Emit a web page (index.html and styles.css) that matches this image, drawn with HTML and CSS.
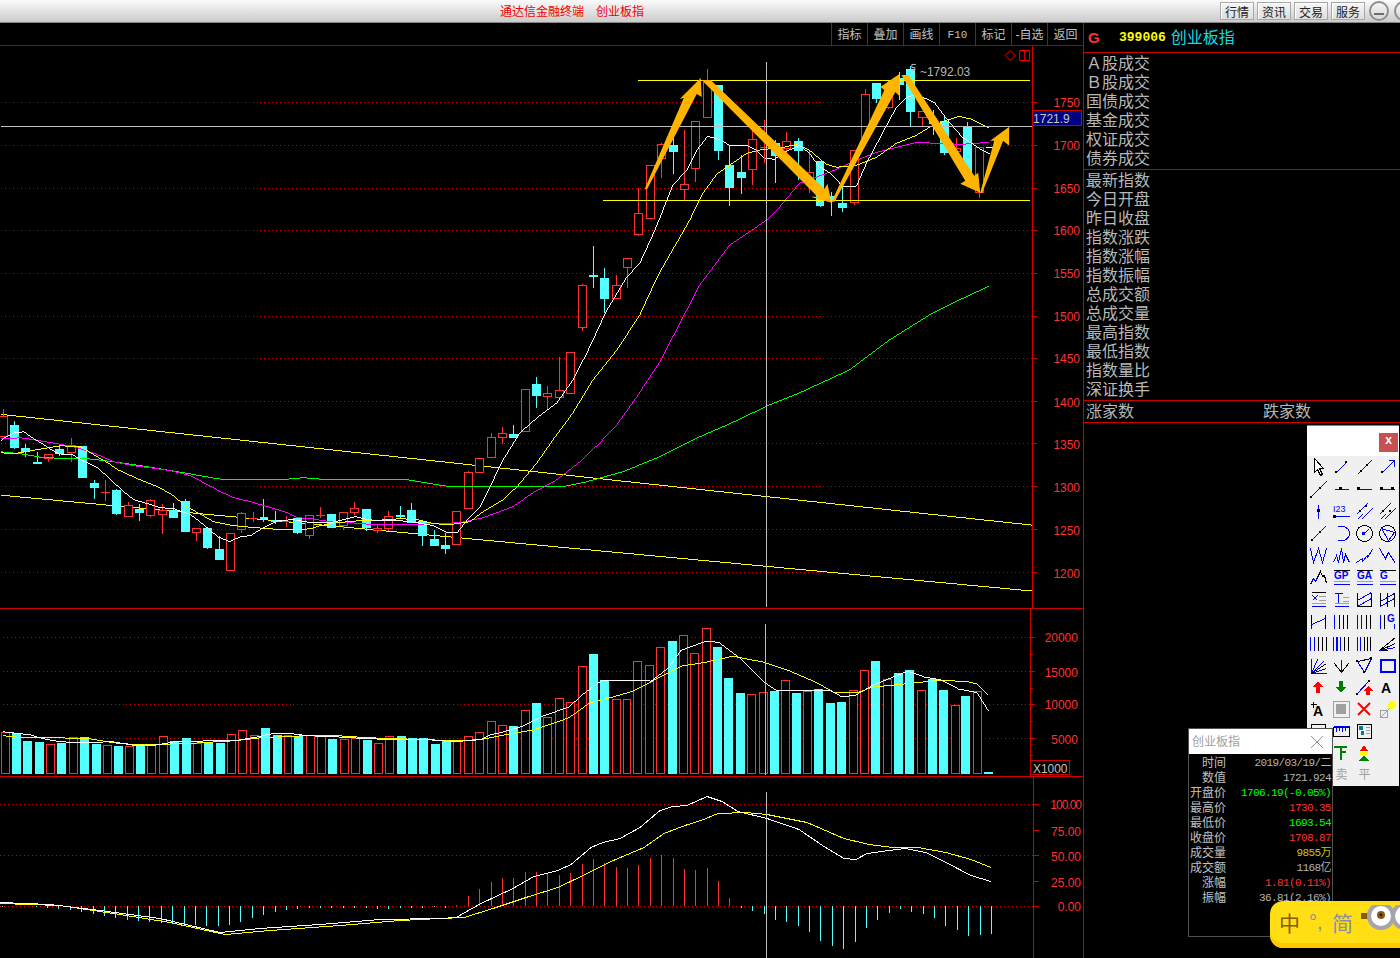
FILE: index.html
```html
<!DOCTYPE html>
<html lang="zh-CN">
<head>
<meta charset="utf-8">
<title>通达信金融终端 创业板指</title>
<link rel="stylesheet" href="styles.css">
</head>
<body>
<header class="titlebar">
  <h1 class="app-title"><span>通达信金融终端</span><span>创业板指</span></h1>
  <nav class="title-actions">
    <button class="menu-btn">行情</button>
    <button class="menu-btn">资讯</button>
    <button class="menu-btn">交易</button>
    <button class="menu-btn">服务</button>
    <span class="round-btn round-min"></span>
    <span class="round-btn round-alt"></span>
  </nav>
</header>
<main class="workspace">
  <section class="chart-col">
    <div class="chart-tools">
      <span class="chart-tool">指标</span>
      <span class="chart-tool">叠加</span>
      <span class="chart-tool">画线</span>
      <span class="chart-tool chart-tool-latin">F10</span>
      <span class="chart-tool">标记</span>
      <span class="chart-tool">-自选</span>
      <span class="chart-tool">返回</span>
    </div>
    <svg id="price" class="panel panel-price" xmlns="http://www.w3.org/2000/svg"></svg>
    <svg id="volume" class="panel panel-volume" xmlns="http://www.w3.org/2000/svg"></svg>
    <svg id="indicator" class="panel panel-indicator" xmlns="http://www.w3.org/2000/svg"></svg>
  </section>
  <aside class="side">
    <div class="side-head">
      <span class="side-mark">G</span>
      <span class="side-code">399006</span>
      <span class="side-name">创业板指</span>
    </div>
    <div class="stat-group">
      <div>Ａ股成交</div><div>Ｂ股成交</div><div>国债成交</div><div>基金成交</div><div>权证成交</div><div>债券成交</div>
    </div>
    <div class="stat-group">
      <div>最新指数</div><div>今日开盘</div><div>昨日收盘</div><div>指数涨跌</div><div>指数涨幅</div><div>指数振幅</div>
      <div>总成交额</div><div>总成交量</div><div>最高指数</div><div>最低指数</div><div>指数量比</div><div>深证换手</div>
    </div>
    <div class="breadth"><span>涨家数</span><span>跌家数</span></div>
  </aside>
</main>

<div class="toolbox">
  <div class="toolbox-head"><span class="toolbox-close">x</span></div>
  <div class="toolbox-grid">
    <svg viewBox="0 0 20 20"><path class="k-w" d="M6 1v14l3-3 3 6 2-1-3-6h4z"/></svg>
    <svg viewBox="0 0 20 20"><path class="b" d="M5 15 15 5"/><path class="kf" d="M4 14h2v2H4zM14 4h2v2h-2z"/></svg>
    <svg viewBox="0 0 20 20"><path class="b" d="M3 17 17 3"/><path class="kf" d="M6 13h2v2H6zM12 7h2v2h-2z"/></svg>
    <svg viewBox="0 0 20 20"><path class="b" d="M5 15 16 4"/><path class="b" d="M11 3h6v6"/><path class="kf" d="M4 14h2v2H4z"/></svg>

    <svg viewBox="0 0 20 20"><path class="b" d="M2 18 18 2"/><path class="kf" d="M2 17h2v2H2zM11 8h2v2h-2z"/></svg>
    <svg viewBox="0 0 20 20"><path class="b" d="M3 10h14"/><path class="kf" d="M8 8h3v3H8z"/></svg>
    <svg viewBox="0 0 20 20"><path class="b" d="M3 10h14"/><path class="kf" d="M3 8h3v3H3z"/></svg>
    <svg viewBox="0 0 20 20"><path class="b" d="M3 10h14"/><path class="kf" d="M3 8h3v3H3zM14 8h3v3h-3z"/></svg>

    <svg viewBox="0 0 20 20"><path class="b" d="M10 3v14"/><path class="kf" d="M9 8h3v3H9z"/></svg>
    <svg viewBox="0 0 20 20"><text class="tool-num" x="2" y="11">I23</text><path class="b" d="M4 15h14"/><path class="kf" d="M2 14h3v3H2z"/></svg>
    <svg viewBox="0 0 20 20"><path class="b" d="M2 13 13 2M7 18 18 7M3 18 8 13"/><path class="kf" d="M5 9h2v2H5zM11 4h2v2h-2z"/></svg>
    <svg viewBox="0 0 20 20"><path class="b" d="M2 13 13 2M7 18 18 7M3 18 8 13"/><path class="kf" d="M5 9h2v2H5zM12 9h2v2h-2z"/></svg>

    <svg viewBox="0 0 20 20"><path class="b" d="M3 17 17 3"/><path class="kf" d="M3 16h2v2H3zM11 8h2v2h-2z"/></svg>
    <svg viewBox="0 0 20 20"><path class="b" d="M6 3h5a7 7 0 0 1 0 14H6"/></svg>
    <svg viewBox="0 0 20 20"><circle class="k" cx="10" cy="10" r="8"/><path class="b" d="M10 10l4-4"/><path class="bf" d="M8 9h3v3H8z"/></svg>
    <svg viewBox="0 0 20 20"><circle class="k" cx="10" cy="10" r="8"/><path class="b" d="M4 5l13 4-6 8z"/></svg>

    <svg viewBox="0 0 20 20"><path class="b" d="M2 3l3 14 5-14 4 14 4-14"/></svg>
    <svg viewBox="0 0 20 20"><path class="b" d="M2 17l3-7 2 7 3-14 2 14 2-8 4 8"/></svg>
    <svg viewBox="0 0 20 20"><path class="b" d="M2 17l6-4v3l5-6v2l5-8"/></svg>
    <svg viewBox="0 0 20 20"><path class="b" d="M2 3l6 10 3-6 7 11"/></svg>

    <svg viewBox="0 0 20 20"><path class="b" d="M2 17l3-6 2 3 2-4"/><path class="k" d="M9 10l3-6 2 5 2-1 2 8"/></svg>
    <svg viewBox="0 0 20 20"><path class="k" d="M2 3h16"/><text class="tool-lab" x="3" y="12">GP</text><path class="g" d="M2 14h16"/><path class="b" d="M2 17h16"/></svg>
    <svg viewBox="0 0 20 20"><path class="k" d="M2 3h16"/><text class="tool-lab" x="3" y="12">GA</text><path class="g" d="M2 14h16"/><path class="b" d="M2 17h16"/></svg>
    <svg viewBox="0 0 20 20"><path class="k" d="M2 3h16"/><text class="tool-lab" x="3" y="12">G</text><path class="g" d="M2 14h16"/><path class="b" d="M2 17h16"/></svg>

    <svg viewBox="0 0 20 20"><path class="k" d="M3 3h14"/><path class="b" d="M3 17h14M4 6l5 5M9 6l-5 5"/><path class="g" d="M10 7h7M10 11h7M3 14h14"/></svg>
    <svg viewBox="0 0 20 20"><path class="b" d="M3 4h8M7 4v9M3 17h14"/><path class="g" d="M11 8h6M11 12h6M3 14h14"/></svg>
    <svg viewBox="0 0 20 20"><path class="k" d="M3 3v14M17 3v14M3 17h14"/><path class="b" d="M3 11 17 3M3 17 17 9"/></svg>
    <svg viewBox="0 0 20 20"><path class="k" d="M3 3v14M10 3v14M17 3v14"/><path class="b" d="M3 12 17 4M3 17 17 9"/></svg>

    <svg viewBox="0 0 20 20"><path class="k" d="M3 3v14M17 3v14"/><path class="b" d="M3 13 17 7"/></svg>
    <svg viewBox="0 0 20 20"><path class="b" d="M3 3v14"/><path class="k" d="M8 3v14M12 3v14M16 3v14"/></svg>
    <svg viewBox="0 0 20 20"><path class="b" d="M3 3v14M7 3v14"/><path class="k" d="M12 3v14M16 3v14"/></svg>
    <svg viewBox="0 0 20 20"><path class="b" d="M3 3v14"/><path class="k" d="M7 3v14"/><text class="tool-lab" x="10" y="11">G</text><path class="b" d="M17 12v5"/></svg>

    <svg viewBox="0 0 20 20"><path class="b" d="M2 3v14M6 3v14"/><path class="k" d="M10 3v14M14 3v14M18 3v14"/></svg>
    <svg viewBox="0 0 20 20"><path class="b" d="M2 3v14M5 3v14M6 3v14M9 3v14"/><path class="k" d="M13 3v14M17 3v14"/></svg>
    <svg viewBox="0 0 20 20"><path class="b" d="M3 3v14M6 3v14"/><path class="k" d="M10 3v14M13 3v14M16 3v14"/></svg>
    <svg viewBox="0 0 20 20"><path class="k" d="M2 17h8M2 17 18 4M2 17 18 10"/><path class="b" d="M2 17 18 14"/></svg>

    <svg viewBox="0 0 20 20"><path class="b" d="M3 3v15h15M3 18 18 13M3 18l12-12M3 18l6-14"/><path class="k" d="M3 18 18 8"/></svg>
    <svg viewBox="0 0 20 20"><path class="k" d="M3 8l7 9 7-9"/><path class="b" d="M10 4v13"/></svg>
    <svg viewBox="0 0 20 20"><path class="k" d="M3 6 17 3"/><path class="b" d="M3 6l7 11 7-14"/><path class="kf" d="M2 5h2v2H2zM9 16h2v2H9zM16 2h2v2h-2z"/></svg>
    <svg viewBox="0 0 20 20"><path class="b tool-frame" d="M3 4h14v12H3z"/></svg>

    <svg viewBox="0 0 20 20"><path class="rf" d="M10 4l5 6h-3v6H8v-6H5z"/></svg>
    <svg viewBox="0 0 20 20"><path class="gf" d="M8 4h4v6h3l-5 6-5-6h3z"/></svg>
    <svg viewBox="0 0 20 20"><path class="b" d="M2 17 15 3"/><path class="kf" d="M2 16h2v2H2zM14 3h2v2h-2z"/><path class="rf" d="M14 9l5 5h-3v4h-4v-4H9z"/></svg>
    <svg viewBox="0 0 20 20"><text class="tool-a" x="4" y="16">A</text></svg>

    <svg viewBox="0 0 20 20"><text class="tool-a" x="5" y="17">A</text><path class="k" d="M2 5h6M5 2v6"/></svg>
    <svg viewBox="0 0 20 20"><path class="g" d="M2 2h16v16H2z"/><path class="sq" d="M5 5h10v10H5z"/></svg>
    <svg viewBox="0 0 20 20"><path class="r2" d="M4 4l12 12M16 4 4 16"/></svg>
    <svg viewBox="0 0 20 20"><path class="g" d="M3 11h7v7H3zM3 18 16 5"/><circle class="yf" cx="15" cy="6" r="4"/></svg>

    <svg viewBox="0 0 20 20"><path class="k" d="M3 3h14v14H3z"/><path class="b" d="M6 7h8"/></svg>
    <svg viewBox="0 0 20 20"><path class="k" d="M2 6h16v9H2z"/><path class="b" d="M5 6v4M8 6v3M11 6v4M14 6v3M2 5h16"/></svg>
    <svg viewBox="0 0 20 20"><path class="k" d="M3 3h14v14H3z"/><path class="tf" d="M5 5h4v4H5zM7 10h3v4H7z"/><path class="g" d="M11 6h4M11 9h4M11 12h4"/></svg>
    <span></span>

    <span></span>
    <svg viewBox="0 0 20 20"><path class="g2" d="M3 4h13M10 4v13M10 9h5"/></svg>
    <svg viewBox="0 0 20 20"><path class="rf" d="M10 2l4 6H6z"/><path class="yf" d="M6 9h8v3H6z"/><path class="dgf" d="M10 12l5 6H5z"/></svg>
    <span></span>

    <span></span>
    <span class="tool-text">卖</span>
    <span class="tool-text">平</span>
    <span></span>
  </div>
</div>

<div class="quote">
  <div class="quote-head"><span>创业板指</span><span class="quote-x"></span></div>
  <dl class="quote-rows">
    <div><dt>时间</dt><dd>2019/03/19/二</dd></div>
    <div><dt>数值</dt><dd>1721.924</dd></div>
    <div><dt>开盘价</dt><dd class="q-green">1706.19(-0.05%)</dd></div>
    <div><dt>最高价</dt><dd class="q-red">1730.35</dd></div>
    <div><dt>最低价</dt><dd class="q-green">1693.54</dd></div>
    <div><dt>收盘价</dt><dd class="q-red">1708.87</dd></div>
    <div><dt>成交量</dt><dd class="q-yellow">9855万</dd></div>
    <div><dt>成交额</dt><dd>1168亿</dd></div>
    <div><dt>涨幅</dt><dd class="q-red">1.81(0.11%)</dd></div>
    <div><dt>振幅</dt><dd>36.81(2.16%)</dd></div>
  </dl>
</div>

<div class="ime">
  <span class="ime-mode">中</span>
  <span class="ime-punc">°,</span>
  <span class="ime-script">简</span>
  <svg class="ime-eyes" viewBox="0 0 40 34" xmlns="http://www.w3.org/2000/svg">
    <path class="eye-strap" d="M0 8h7v6H0z"/>
    <circle class="eye-ring" cx="20" cy="11" r="12"/>
    <circle class="eye-pupil" cx="20" cy="10" r="4"/>
    <circle class="eye-dot" cx="20" cy="10" r="1.4"/>
    <circle class="eye-ring" cx="44" cy="11" r="12"/>
  </svg>
</div>
<script src="script.js"></script>
</body>
</html>
```
FILE: styles.css
```css
* { box-sizing: border-box; }
html, body { margin: 0; height: 958px; overflow: hidden; background: #000; }
body {
  position: relative;
  width: 1400px;
  font-family: "Liberation Sans", "Noto Sans CJK SC", sans-serif;
  font-size: 12px;
  color: #c0c0c0;
}

/* title bar */
.titlebar {
  display: flex;
  align-items: center;
  height: 23px;
  padding-left: 500px;
  background: linear-gradient(#fbfbfb, #cbcbcb);
  border-bottom: 1px solid #858585;
  overflow: hidden;
}
.app-title {
  display: flex;
  gap: 12px;
  flex: none;
  width: 144px;
  margin: -2px 0 0;
  font-size: 12px;
  font-weight: 400;
  color: #f00000;
}
.title-actions {
  display: flex;
  align-items: center;
  flex: none;
  gap: 3px;
  margin-left: 576px;
}
.menu-btn {
  width: 34px;
  height: 18px;
  padding: 0 0 2px;
  font: inherit;
  color: #222;
  background: linear-gradient(#f6f6f6, #dedede);
  border: 1px solid #a8a8a8;
  box-shadow: inset 1px 1px 0 #fff;
}
.round-btn {
  position: relative;
  flex: none;
  width: 20px;
  height: 20px;
  margin-left: 1px;
  background: linear-gradient(#f4f4f4, #d8d8d8);
  border: 2px solid #8e8e8e;
  border-radius: 50%;
}
.round-min::after {
  content: "";
  position: absolute;
  left: 3px;
  right: 3px;
  bottom: 4px;
  height: 2px;
  background: #6e6e6e;
}
.round-alt { margin-left: 2px; }
.round-alt::after {
  content: "";
  position: absolute;
  left: 4px;
  top: 4px;
  width: 8px;
  height: 8px;
  border: 1px solid #6e6e6e;
}

/* main layout */
.workspace { display: flex; height: 935px; }
.chart-col { flex: none; width: 1083px; }
.chart-tools {
  display: flex;
  justify-content: flex-end;
  height: 23px;
  border-bottom: 1px solid #a80000;
}
.chart-tool {
  width: 36px;
  line-height: 24px;
  text-align: center;
  border-left: 1px solid #c00000;
  white-space: nowrap;
}
.chart-tool-latin { font-family: "Liberation Mono", monospace; font-size: 11px; }
.panel { display: block; width: 1083px; border-bottom: 1px solid #d00000; }
.panel-price { height: 563px; }
.panel-volume { height: 168px; }
.panel-indicator { height: 181px; border-bottom: 0; }

/* chart drawing */
.grid { stroke: #d00000; stroke-width: 1; stroke-dasharray: 1 3; fill: none; shape-rendering: crispEdges; }
.axis { stroke: #d00000; stroke-width: 1; fill: none; shape-rendering: crispEdges; }
.axis-text { fill: #ff3232; font-size: 12px; text-anchor: end; }
.axis-text-tight { letter-spacing: -1px; }
.body-up { fill: #000; stroke: #ff3232; stroke-width: 1; shape-rendering: crispEdges; }
.body-down { fill: #54ffff; shape-rendering: crispEdges; }
.body-flat { fill: #fff; shape-rendering: crispEdges; }
.wick-up { stroke: #ff3232; stroke-width: 1; shape-rendering: crispEdges; }
.wick-down { stroke: #54ffff; stroke-width: 1; shape-rendering: crispEdges; }
.curve { fill: none; stroke-width: 1; shape-rendering: crispEdges; }
.c-white { stroke: #fff; }
.c-yellow { stroke: #ffff00; }
.c-magenta { stroke: #ff00ff; }
.c-green { stroke: #00ff00; }
.trend { stroke: #ffff00; stroke-width: 1; shape-rendering: crispEdges; }
.level { stroke: #ffff00; stroke-width: 1; shape-rendering: crispEdges; }
.cross { stroke: #c0c0c0; stroke-width: 1; shape-rendering: crispEdges; }
.arrow { fill: #ffb400; }
.peak-text { fill: #b8b8b8; font-size: 12px; text-anchor: end; }
.peak-mark { fill: none; stroke: #b8b8b8; stroke-width: 1; }
.marker { fill: none; stroke: #f00000; stroke-width: 1; }
.price-box { fill: #000080; stroke: #d00000; shape-rendering: crispEdges; }
.price-text { fill: #c8c8c8; font-size: 12px; }
.scale-box { fill: #000; stroke: #d00000; shape-rendering: crispEdges; }
.scale-text { fill: #c0c0c0; font-size: 12px; }

/* right panel */
.side { flex: 1; border-left: 1px solid #c80000; }
.side-head {
  display: flex;
  align-items: center;
  height: 30px;
  padding-left: 4px;
  border-bottom: 1px solid #c80000;
}
.side-mark { width: 31px; font: 700 15px "Liberation Sans", sans-serif; color: #ff3232; }
.side-code { font: 700 13px "Liberation Mono", monospace; color: #ffff00; }
.side-name { margin-left: 5px; padding-bottom: 3px; font-size: 16px; color: #19d8e8; }
.stat-group {
  padding: 1px 0 1px 2px;
  font-size: 16px;
  line-height: 19px;
  color: #b8b8b8;
  border-bottom: 1px solid #c80000;
}
.breadth {
  display: flex;
  height: 22px;
  padding-left: 2px;
  font-size: 16px;
  line-height: 21px;
  color: #b8b8b8;
  border-bottom: 1px solid #c80000;
}
.breadth span { width: 177px; }

/* floating drawing tools */
.toolbox {
  position: absolute;
  left: 1307px;
  top: 425px;
  width: 92px;
  height: 361px;
  background: #f0f0f0;
  border-top: 1px solid #4a90c8;
}
.toolbox-head {
  display: flex;
  justify-content: flex-end;
  height: 30px;
  padding: 7px 1px 0 0;
  background: #fff;
}
.toolbox-close {
  width: 19px;
  height: 19px;
  font: 700 12px/17px "Liberation Mono", monospace;
  text-align: center;
  color: #fff;
  background: #c75050;
}
.toolbox-grid {
  display: grid;
  grid-template-columns: repeat(4, 23px);
  grid-auto-rows: 22px;
}
.toolbox-grid svg { width: 20px; height: 20px; margin: 1px 0 0 1px; shape-rendering: crispEdges; }
.toolbox-grid path, .toolbox-grid circle { fill: none; }
.toolbox-grid .k, .toolbox-grid .b, .toolbox-grid .g { transform: translate(0.5px, 0.5px); }
.toolbox-grid .k { stroke: #000; }
.toolbox-grid .k-w { stroke: #000; fill: #fff; transform: translate(0.5px, 0.5px); }
.toolbox-grid .kf { fill: #000; }
.toolbox-grid .b { stroke: #0000ff; }
.toolbox-grid .bf { fill: #0000ff; }
.toolbox-grid .g { stroke: #a0a0a0; }
.toolbox-grid .sq { fill: #a0a0a0; }
.toolbox-grid .g2 { stroke: #008000; stroke-width: 2; }
.toolbox-grid .gf { fill: #008000; }
.toolbox-grid .rf { fill: #ff0000; }
.toolbox-grid .r2 { stroke: #ff0000; stroke-width: 2; shape-rendering: auto; }
.toolbox-grid .yf { fill: #ffff00; }
.toolbox-grid .dgf { fill: #008000; }
.toolbox-grid .tf { fill: #008080; }
.toolbox-grid .tool-frame { stroke-width: 2; }
.tool-num { fill: #0000ff; font-size: 9px; }
.tool-lab { fill: #0000ff; font-size: 10px; font-weight: 700; }
.tool-a { fill: #000; font-size: 14px; font-weight: 700; }
.tool-text { font-size: 12px; line-height: 22px; text-align: center; color: #a0a0a0; }

/* quote popup */
.quote {
  position: absolute;
  left: 1188px;
  top: 728px;
  width: 145px;
  height: 209px;
  background: #000;
  border: 1px solid #505050;
}
.quote-head {
  display: flex;
  justify-content: space-between;
  align-items: center;
  height: 25px;
  padding: 0 9px 2px 3px;
  font-size: 12px;
  color: #a0a0a0;
  background: #fff;
}
.quote-x {
  position: relative;
  margin-top: 2px;
  width: 12px;
  height: 12px;
  background:
    linear-gradient(45deg, transparent 46%, #909090 46%, #909090 54%, transparent 54%),
    linear-gradient(-45deg, transparent 46%, #909090 46%, #909090 54%, transparent 54%);
}
.quote-rows { margin: 2px 0 0; }
.quote-rows div { display: flex; height: 15px; line-height: 15px; }
.quote-rows dt { width: 37px; text-align: right; white-space: nowrap; }
.quote-rows dd {
  flex: 1;
  margin: 0;
  padding-right: 1px;
  text-align: right;
  white-space: nowrap;
  font-family: "Liberation Mono", "Noto Sans CJK SC", monospace;
  font-size: 11px;
  letter-spacing: -0.6px;
  color: #b4b4b4;
}
.quote-rows .q-green { color: #00ff00; }
.quote-rows .q-red { color: #ff3232; }
.quote-rows .q-yellow { color: #c8c800; }

/* input method bar */
.ime {
  position: absolute;
  left: 1270px;
  top: 901px;
  display: flex;
  align-items: center;
  width: 150px;
  height: 47px;
  padding: 0 0 5px 9px;
  background: #ffdf14;
  border-radius: 13px;
  box-shadow: inset 0 -5px 0 #ffc800;
}
.ime-mode { width: 30px; font-size: 21px; color: #8a5a12; }
.ime-punc { width: 23px; font-size: 20px; color: #8e8e9e; }
.ime-script { width: 29px; font-size: 21px; color: #8e8e9e; }
.ime-eyes { flex: none; width: 40px; height: 34px; overflow: hidden; }
.eye-strap { fill: #8a5a12; }
.eye-ring { fill: #fff; stroke: #a4a4ae; stroke-width: 4; }
.eye-pupil { fill: #8a5a12; }
.eye-dot { fill: #2a1a08; }
```
FILE: script.js
```js
var NS = "http://www.w3.org/2000/svg";

function add(svg, tag, cls, attrs, text) {
  var el = document.createElementNS(NS, tag);
  if (cls) el.setAttribute("class", cls);
  for (var k in attrs) el.setAttribute(k, attrs[k]);
  if (text !== undefined) el.textContent = text;
  svg.appendChild(el);
  return el;
}
function X(i) { return Math.floor(2.1 + 11.372 * i); }
function curve(svg, cls, pts) {
  add(svg, "polyline", "curve " + cls, {
    points: pts.map(function (p) { return p[0] + "," + (p[1] + 0.5); }).join(" ")
  });
}
function hline(svg, cls, y, x1, x2) {
  add(svg, "line", cls, { x1: x1, x2: x2, y1: y + 0.5, y2: y + 0.5 });
}
function vline(svg, cls, x, y1, y2) {
  add(svg, "line", cls, { x1: x + 0.5, x2: x + 0.5, y1: y1, y2: y2 });
}
function axisLabel(svg, txt, y, cls) {
  add(svg, "text", "axis-text" + (cls ? " " + cls : ""), { x: 1081, y: y + 5 }, txt);
}

/* [body top, body bottom, high, low, kind] */
var candles = [
[417,437,410,437,"r"],[426,448,422,450,"c"],[449,452,445,458,"c"],[463,463,453,464,"c"],[455,459,455,463,"r"],
[450,454,447,457,"c"],[446,453,439,463,"r"],[447,478,447,479,"c"],[484,488,481,500,"c"],[493,493,481,502,"r"],
[491,514,490,516,"c"],[506,517,503,517,"r"],[510,513,505,522,"c"],[501,516,500,518,"r"],[511,515,505,535,"r"],
[511,518,504,519,"c"],[502,532,500,533,"c"],[529,533,529,542,"r"],[529,548,529,550,"c"],[550,560,537,561,"c"],
[534,571,534,571,"r"],[514,530,513,534,"r"],[519,519,513,523,"r"],[518,518,500,523,"c"],[521,521,512,525,"c"],
[522,522,517,528,"r"],[519,533,519,535,"c"],[516,536,516,540,"r"],[516,516,508,519,"r"],[515,528,515,528,"c"],
[513,526,513,531,"r"],[509,513,503,516,"r"],[510,528,510,532,"c"],[529,531,526,534,"r"],[517,529,512,532,"r"],
[516,516,507,520,"c"],[511,523,504,523,"c"],[522,536,522,547,"c"],[540,546,531,546,"c"],[546,549,534,555,"c"],
[512,545,512,545,"r"],[473,509,472,509,"r"],[459,473,459,473,"r"],[438,458,434,459,"r"],[434,438,428,445,"r"],
[435,438,426,439,"c"],[390,432,390,432,"r"],[385,396,378,409,"c"],[394,397,387,411,"r"],[391,398,358,399,"r"],
[353,394,353,395,"r"],[285,328,284,332,"r"],[275,275,246,288,"c"],[278,298,268,313,"c"],[285,298,275,299,"r"],
[258,267,258,288,"r"],[213,234,188,236,"r"],[165,218,165,219,"r"],[144,158,143,178,"r"],[145,151,138,174,"c"],
[184,189,130,200,"r"],[121,168,121,182,"r"],[82,117,69,117,"r"],[85,150,85,160,"c"],[165,187,145,206,"c"],
[172,177,155,194,"c"],[139,169,130,185,"r"],[147,147,120,163,"r"],[143,155,140,183,"c"],[141,148,132,163,"r"],
[141,150,138,180,"c"],[172,183,150,193,"r"],[161,205,161,207,"c"],[196,200,192,216,"c"],[203,207,183,212,"c"],
[150,202,150,205,"r"],[94,137,89,137,"r"],[83,98,83,103,"c"],[86,107,80,109,"r"],[78,84,72,100,"c"],
[69,111,66,127,"c"],[111,117,111,126,"r"],[121,123,110,135,"c"],[121,152,117,155,"c"],[148,151,138,151,"r"],
[127,173,122,175,"c"],[147,192,147,198,"r"],[147,147,147,147,"w"]
];
var volumes = [
[733,"r"],[734,"c"],[742,"c"],[743,"c"],[745,"r"],[744,"c"],[738,"r"],[738,"c"],[745,"c"],[746,"r"],
[747,"c"],[747,"r"],[745,"c"],[745,"r"],[737,"r"],[742,"c"],[739,"c"],[744,"r"],[744,"c"],[744,"c"],
[735,"r"],[731,"r"],[736,"r"],[729,"c"],[736,"c"],[736,"r"],[737,"c"],[736,"r"],[736,"r"],[740,"c"],
[740,"r"],[739,"r"],[741,"c"],[744,"r"],[737,"r"],[737,"c"],[739,"c"],[739,"c"],[745,"c"],[741,"c"],
[742,"r"],[737,"r"],[733,"r"],[722,"r"],[726,"r"],[727,"c"],[711,"r"],[704,"c"],[718,"r"],[699,"r"],
[703,"r"],[666,"r"],[654,"c"],[680,"c"],[700,"r"],[700,"r"],[661,"r"],[665,"r"],[647,"r"],[641,"c"],
[635,"r"],[653,"r"],[628,"r"],[647,"c"],[678,"c"],[694,"c"],[695,"r"],[693,"r"],[691,"c"],[680,"r"],
[693,"c"],[691,"r"],[689,"c"],[704,"c"],[703,"c"],[690,"r"],[670,"r"],[661,"c"],[679,"r"],[673,"c"],
[670,"c"],[690,"r"],[679,"c"],[690,"c"],[706,"r"],[697,"c"],[691,"r"],[773,"c"]
];
/* indicator bar end points, by candle index; above 906 is red, below is cyan */
var macd = [
907,906,906,907,908,909,910,912,914,916,918,920,921,922,923,924,925,925,926,926,
925,922,918,915,912,910,909,908,908,908,908,908,908,909,909,908,908,908,907,908,
905,896,889,882,878,878,872,872,873,875,873,864,859,863,867,868,865,858,855,858,
869,870,868,881,898,908,911,914,920,922,926,932,941,946,949,942,928,920,913,909,
912,914,918,926,930,936,935,934
];

var ma5 = [[0,441],[5,437],[13,433],[23,432],[33,439],[43,445],[57,454],[72,455],[80,460],[97,468],[110,480],[123,492],[133,500],[147,504],[160,508],[173,509],[190,515],[203,525],[217,537],[229,542],[240,537],[250,536],[263,528],[277,521],[293,520],[310,523],[330,523],[343,520],[355,517],[367,520],[380,521],[400,521],[417,523],[433,526],[447,533],[457,533],[470,517],[480,507],[490,487],[503,460],[520,433],[537,418],[557,403],[573,380],[587,353],[607,310],[627,277],[640,263],[652,237],[660,218],[673,185],[687,170],[697,150],[708,136],[720,139],[730,145],[747,145],[757,150],[765,158],[775,159],[785,152],[800,145],[810,153],[820,167],[833,175],[843,186],[857,186],[867,163],[883,133],[897,107],[907,97],[917,94],[935,102],[947,118],[963,137],[980,148],[991,154]];
var ma10 = [[0,453],[13,454],[47,448],[60,446],[80,447],[93,455],[107,463],[117,470],[137,479],[157,487],[173,496],[183,505],[197,513],[213,522],[227,525],[243,527],[267,529],[283,530],[300,530],[310,529],[320,526],[337,523],[360,521],[373,521],[400,519],[417,520],[433,524],[450,525],[470,522],[483,512],[503,500],[517,487],[537,463],[553,440],[573,413],[593,380],[617,350],[640,315],[650,293],[660,272],[690,220],[703,193],[718,173],[730,165],[747,153],[763,149],[780,148],[797,144],[810,150],[827,164],[837,167],[857,165],[877,157],[897,143],[917,135],[930,127],[947,120],[960,116],[973,119],[990,128]];
var ma20 = [[0,439],[20,438],[33,440],[57,444],[77,448],[97,455],[113,462],[133,466],[150,468],[170,471],[190,476],[207,485],[220,492],[233,498],[250,502],[267,507],[287,513],[297,518],[310,519],[330,522],[350,523],[373,525],[400,525],[440,524],[460,523],[483,518],[513,507],[533,493],[557,480],[580,462],[600,443],[617,425],[637,397],[660,362],[700,285],[730,245],[767,220],[780,207],[800,183],[830,172],[857,160],[877,152],[897,147],[917,142],[937,143],[963,144],[990,142]];
var ma60 = [[0,452],[20,454],[43,458],[87,459],[113,462],[147,467],[183,473],[217,479],[227,480],[280,480],[303,478],[327,480],[407,480],[443,486],[453,487],[507,487],[563,487],[587,482],[623,472],[660,457],[700,437],[730,424],[770,405],[800,393],[850,370],[890,340],[930,315],[960,300],[990,286]];

var volWhite = [[0,732],[27,735],[40,739],[57,742],[77,743],[110,742],[133,746],[150,746],[173,742],[213,741],[233,741],[257,737],[270,734],[290,734],[307,736],[333,737],[367,739],[400,740],[427,740],[453,742],[480,740],[490,735],[500,733],[521,727],[541,717],[569,707],[586,692],[603,680],[631,680],[652,681],[669,668],[682,650],[707,641],[720,642],[741,658],[765,682],[779,691],[810,690],[831,690],[844,697],[858,695],[875,685],[910,671],[927,677],[944,680],[961,689],[980,693],[991,711]];
var volYellow = [[0,736],[20,738],[53,738],[87,739],[110,743],[133,745],[183,744],[233,741],[260,738],[303,736],[337,736],[367,738],[427,740],[453,741],[480,740],[500,736],[534,730],[569,718],[590,703],[610,698],[634,691],[655,680],[682,666],[707,662],[734,656],[765,662],[789,670],[817,682],[837,693],[858,693],[875,687],[906,684],[944,680],[972,682],[980,684],[991,695]];

var macdWhite = [[0,902],[50,904],[100,910],[160,918],[220,932],[260,928],[320,924],[380,919],[440,918],[456,917],[481,903],[513,888],[534,876],[558,870],[571,864],[591,847],[603,842],[620,838],[640,827],[660,810],[673,806],[687,805],[707,796],[722,801],[738,811],[767,818],[799,829],[824,846],[844,858],[856,859],[867,853],[889,850],[905,848],[926,852],[946,862],[971,875],[991,881]];
var macdYellow = [[0,903],[60,905],[120,914],[170,922],[225,934],[270,930],[340,925],[400,920],[440,918],[464,917],[493,908],[526,897],[558,887],[583,875],[611,861],[644,847],[664,833],[685,825],[701,820],[718,813],[746,812],[767,814],[807,822],[844,838],[869,844],[893,847],[918,847],[946,852],[971,859],[991,867]];

var arrows = [
"645,189 684,98 680,99 701,78 702,97 697,94 647,190",
"702,80 818,197 811,197 832,203 828,184 825,189 711,80",
"832,202 885,90 881,87 900,74 900,96 896,92 835,202",
"902,75 966,181 961,184 981,193 979,173 975,176 909,75",
"981,193 995,141 991,141 1010,127 1010,146 1004,141 983,193"
];

function setup(svg, y0, h) {
  svg.setAttribute("viewBox", "0 " + y0 + " 1083 " + h);
}

/* price panel */
(function () {
  var s = document.getElementById("price");
  setup(s, 46, 563);
  [102,145,188,230,273,316,359,402,444,487,530,573].forEach(function (y) {
    hline(s, "grid", y, 0, 1033);
    hline(s, "axis", y, 1033, 1038);
  });
  add(s, "line", "trend", { x1: 0, y1: 415, x2: 1033, y2: 526 });
  add(s, "line", "trend", { x1: 0, y1: 496, x2: 1033, y2: 592 });
  candles.forEach(function (c, i) {
    var x = X(i), up = c[4] === "r", flat = c[4] === "w";
    if (flat) {
      add(s, "rect", "body-flat", { x: x - 4, y: c[0], width: 9, height: 1 });
      return;
    }
    var wick = up ? "wick-up" : "wick-down";
    if (c[2] < c[0]) vline(s, wick, x, c[2], c[0]);
    if (c[3] > c[1]) vline(s, wick, x, c[1], c[3]);
    if (c[1] - c[0] < 1) {
      add(s, "rect", up ? "body-up" : "body-down", { x: x - 4 + (up ? 0.5 : 0), y: c[0] + (up ? 0.5 : 0), width: up ? 8 : 9, height: up ? 0.1 : 2 });
    } else if (up) {
      add(s, "rect", "body-up", { x: x - 3.5, y: c[0] + 0.5, width: 8, height: c[1] - c[0] });
    } else {
      add(s, "rect", "body-down", { x: x - 4, y: c[0], width: 9, height: c[1] - c[0] + 1 });
    }
  });
  curve(s, "c-green", ma60);
  curve(s, "c-magenta", ma20);
  curve(s, "c-yellow", ma10);
  curve(s, "c-white", ma5);
  hline(s, "level", 80, 638, 1031);
  hline(s, "level", 200, 603, 1031);
  hline(s, "cross", 126, 0, 1033);
  vline(s, "cross", 766, 62, 608);
  arrows.forEach(function (p) { add(s, "polygon", "arrow", { points: p }); });
  add(s, "path", "peak-mark", { d: "M912.5 64.5h4M912.5 64.5v3h3v3h-3" });
  add(s, "text", "peak-text", { x: 971, y: 76 }, "~1792.03");
  add(s, "path", "marker", { d: "M1011 50.5l5 5-5 5-5-5z" });
  add(s, "path", "marker", { d: "M1020.5 50.5h10v10h-10zM1025.5 50.5v10" });
  vline(s, "axis", 1033, 46, 609);
  ["1750","1700","1650","1600","1550","1500","1450","1400","1350","1300","1250","1200"].forEach(function (t, i) {
    axisLabel(s, t, [102,145,188,230,273,316,359,403,445,488,531,574][i]);
  });
  add(s, "rect", "price-box", { x: 1033.5, y: 110.5, width: 49, height: 15 });
  add(s, "text", "price-text", { x: 1034, y: 123 }, "1721.9");
})();

/* volume panel */
(function () {
  var s = document.getElementById("volume");
  setup(s, 609, 168);
  [637,671,705,739].forEach(function (y) {
    hline(s, "grid", y, 0, 1033);
    hline(s, "axis", y, 1033, 1038);
    hline(s, "axis", y + 17, 1033, 1036);
  });
  volumes.forEach(function (v, i) {
    var x = X(i);
    if (v[1] === "r") add(s, "rect", "body-up", { x: x - 3.5, y: v[0] + 0.5, width: 8, height: 774 - v[0] });
    else add(s, "rect", "body-down", { x: x - 4, y: v[0], width: 9, height: 775 - v[0] });
  });
  curve(s, "c-yellow", volYellow);
  curve(s, "c-white", volWhite);
  vline(s, "cross", 766, 624, 776);
  vline(s, "axis", 1033, 609, 777);
  ["20000","15000","10000","5000"].forEach(function (t, i) {
    axisLabel(s, t, [637,672,705,740][i]);
  });
  add(s, "rect", "scale-box", { x: 1033.5, y: 761.5, width: 39, height: 14 });
  add(s, "text", "scale-text", { x: 1036, y: 774 }, "X1000");
})();

/* indicator panel */
(function () {
  var s = document.getElementById("indicator");
  setup(s, 777, 181);
  [804,855,906].forEach(function (y) { hline(s, "grid", y, 0, 1033); });
  [804,830,855,881,906].forEach(function (y) { hline(s, "axis", y, 1033, 1039); });
  macd.forEach(function (y, i) {
    var x = X(i);
    if (y < 906) vline(s, "wick-up", x, y, 906);
    else if (y > 906) vline(s, "wick-down", x, 906, y);
  });
  curve(s, "c-yellow", macdYellow);
  curve(s, "c-white", macdWhite);
  vline(s, "cross", 766, 792, 958);
  vline(s, "axis", 1033, 777, 958);
  axisLabel(s, "100.00", 804, "axis-text-tight");
  axisLabel(s, "75.00", 831);
  axisLabel(s, "50.00", 856);
  axisLabel(s, "25.00", 882);
  axisLabel(s, "0.00", 906);
})();
```
